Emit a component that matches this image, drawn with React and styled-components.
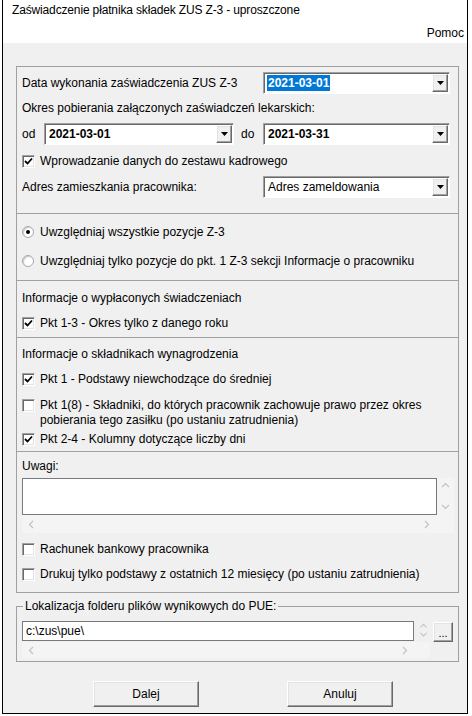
import React from 'react'
import styled, { createGlobalStyle } from 'styled-components'

const Global = createGlobalStyle`
	body {
		margin: 0;
		background: #fff;
		font-family: "Liberation Sans", Arial, sans-serif;
		font-size: 12px;
		color: #000;
	}
	* { box-sizing: border-box; }
`

const Window = styled.div`
	width: 466px;
	height: 714px;
	margin-left: 2px;
	border: 1px solid #000;
	border-top: none;
	display: flex;
	flex-direction: column;
	background: #f0f0f0;
`

const TitleBar = styled.div`
	background: #fff;
	height: 43px;
	flex-shrink: 0;
	padding: 3px 3px 0 9px;
	display: flex;
	flex-direction: column;
	line-height: 15px;
`

const Title = styled.div`
	letter-spacing: -0.15px;
`

const Menu = styled.div`
	margin-top: 8px;
	text-align: right;
`

const Content = styled.div`
	flex: 1;
	padding: 23px 0 0 13px;
	display: flex;
	flex-direction: column;
`

const Panel = styled.div`
	width: 443px;
	border: 1px solid #a0a0a0;
`

const Section = styled.div`
	padding: 0 8px ${({ $pb }) => $pb}px 5px;
	& + & {
		border-top: 1px solid #a0a0a0;
	}
`

const Row = styled.div`
	display: flex;
	align-items: ${({ $top }) => ($top ? 'flex-start' : 'center')};
	height: ${({ $h }) => $h || 20}px;
	margin-top: ${({ $mt }) => $mt || 0}px;
	gap: 5px;
	line-height: 15px;
`

const FieldRow = styled.div`
	display: grid;
	grid-template-columns: ${({ $cols }) => $cols};
	align-items: center;
	height: 22px;
	margin-top: ${({ $mt }) => $mt || 0}px;
`

const Combo = styled.div`
	height: 22px;
	display: flex;
	align-items: center;
	background: #fff;
	border: 1px solid;
	border-color: #a0a0a0 #fff #fff #a0a0a0;
	box-shadow: inset 1px 1px 0 #696969;
	padding: 1px 1px 1px 3px;
`

const ComboValue = styled.div`
	flex: 1;
	font-weight: ${({ $bold }) => ($bold ? 700 : 400)};
	span {
		display: inline-block;
		line-height: 16px;
		padding: 0 1px;
		background: ${({ $selected }) => ($selected ? '#0078d7' : 'transparent')};
		color: ${({ $selected }) => ($selected ? '#fff' : '#000')};
	}
`

const RaisedButton = styled.div`
	display: flex;
	align-items: center;
	justify-content: center;
	background: #f0f0f0;
	border: 1px solid;
	border-color: #fff #696969 #696969 #fff;
	box-shadow: inset -1px -1px 0 #a0a0a0, inset 1px 1px 0 #e3e3e3;
`

const DropButton = styled(RaisedButton)`
	width: 16px;
	height: 18px;
	align-self: flex-end;
`

const Box = styled.div`
	width: 13px;
	height: 13px;
	flex-shrink: 0;
	display: flex;
	align-items: center;
	justify-content: center;
	background: #fff;
	border: 1px solid;
	border-color: #a0a0a0 #fff #fff #a0a0a0;
	box-shadow: inset 1px 1px 0 #696969, inset -1px -1px 0 #e3e3e3;
	margin-top: ${({ $mt }) => $mt || 0}px;
`

const RadioDot = styled.div`
	width: 12px;
	height: 12px;
	flex-shrink: 0;
	border-radius: 50%;
	background: #fff;
	border: 1px solid #a9a9a9;
	box-shadow: inset 1px 1px 1px #c8c8c8;
	display: flex;
	align-items: center;
	justify-content: center;
	margin-right: 1px;

	&::after {
		content: '';
		width: 4px;
		height: 4px;
		border-radius: 50%;
		background: ${({ $on }) => ($on ? '#000' : 'transparent')};
	}
`

const Memo = styled.div`
	display: grid;
	grid-template-columns: 415px 17px;
	grid-template-rows: 37px 18px;
	margin-top: 2px;
	background: #f4f4f4;
	width: 432px;
`

const MemoArea = styled.div`
	background: #fff;
	border: 1px solid #7a7a7a;
`

const VScroll = styled.div`
	display: flex;
	flex-direction: column;
	align-items: center;
	justify-content: space-between;
	padding: ${({ $pad }) => $pad};
`

const HScroll = styled.div`
	grid-column: 1 / span 2;
	display: flex;
	align-items: center;
	justify-content: space-between;
	padding: 0 ${({ $pr }) => $pr}px 0 6px;
`

const Group = styled.fieldset`
	width: 443px;
	margin: 6px 0 0;
	padding: 7px 5px 3px;
	border: 1px solid #a0a0a0;
`

const Legend = styled.legend`
	padding: 0 2px;
	margin-left: 1px;
	line-height: 15px;
`

const PathRow = styled.div`
	display: grid;
	grid-template-columns: 392px 18px 21px;
	align-items: start;
`

const PathInput = styled.div`
	height: 20px;
	background: #fff;
	border: 1px solid #7a7a7a;
	padding-left: 3px;
	line-height: 18px;
`

const Spinner = styled.div`
	height: 20px;
	display: flex;
	flex-direction: column;
	align-items: center;
	justify-content: space-around;
	padding: 2px 0;
`

const BrowseButton = styled(RaisedButton)`
	height: 20px;
	margin-top: 1px;
	margin-left: 1px;
	font-size: 11px;
	line-height: 8px;
	align-items: flex-end;
	padding-bottom: 4px;
`

const PathScroll = styled.div`
	width: 408px;
	height: 16px;
	background: #f4f4f4;
	display: flex;
	align-items: center;
	justify-content: space-between;
	padding: 0 20px 0 6px;
`

const Buttons = styled.div`
	display: flex;
	gap: 88px;
	margin-top: 19px;
	padding-left: 77px;
`

const DialogButton = styled(RaisedButton)`
	width: 106px;
	height: 26px;
`

const Check = () => (
	<svg width="9" height="9" viewBox="0 0 9 9">
		<path d="M1 4 L3.5 6.5 L8 1.5" stroke="#000" strokeWidth="1.8" fill="none" />
	</svg>
)

const Chevron = ({ dir }) => {
	const d = {
		up: 'M1 5 L4.5 1.5 L8 5',
		down: 'M1 2 L4.5 5.5 L8 2',
		left: 'M5 1 L1.5 4.5 L5 8',
		right: 'M2 1 L5.5 4.5 L2 8',
	}[dir]
	return (
		<svg width="9" height="9" viewBox="0 0 9 9">
			<path d={d} stroke="#c2c2c2" strokeWidth="1.2" fill="none" />
		</svg>
	)
}

const Arrow = () => (
	<svg width="7" height="4" viewBox="0 0 7 4">
		<path d="M0 0 H7 L3.5 4 Z" fill="#000" />
	</svg>
)

const ComboBox = ({ value, bold, selected }) => (
	<Combo>
		<ComboValue $bold={bold} $selected={selected}>
			<span>{value}</span>
		</ComboValue>
		<DropButton>
			<Arrow />
		</DropButton>
	</Combo>
)

const CheckRow = ({ checked, children, mt, h, top }) => (
	<Row $mt={mt} $h={h} $top={top}>
		<Box $mt={top ? 1 : 0}>{checked && <Check />}</Box>
		<div>{children}</div>
	</Row>
)

const RadioRow = ({ on, children, mt }) => (
	<Row $mt={mt}>
		<RadioDot $on={on} />
		<div>{children}</div>
	</Row>
)

export default function App() {
	return (
		<>
			<Global />
			<Window>
				<TitleBar>
					<Title>Zaświadczenie płatnika składek ZUS Z-3 - uproszczone</Title>
					<Menu>Pomoc</Menu>
				</TitleBar>
				<Content>
					<Panel>
						<Section $pb={15}>
							<FieldRow $mt={5} $cols="241px 187px">
								<div>Data wykonania zaświadczenia ZUS Z-3</div>
								<ComboBox value="2021-03-01" bold selected />
							</FieldRow>
							<Row $mt={4}>Okres pobierania załączonych zaświadczeń lekarskich:</Row>
							<FieldRow $mt={5} $cols="22px 190px 29px 187px">
								<div>od</div>
								<ComboBox value="2021-03-01" bold />
								<div style={{ paddingLeft: 7 }}>do</div>
								<ComboBox value="2021-03-31" bold />
							</FieldRow>
							<CheckRow mt={6} checked>
								Wprowadzanie danych do zestawu kadrowego
							</CheckRow>
							<FieldRow $mt={5} $cols="241px 187px">
								<div>Adres zamieszkania pracownika:</div>
								<ComboBox value="Adres zameldowania" />
							</FieldRow>
						</Section>
						<Section $pb={9}>
							<RadioRow mt={8} on>
								Uwzględniaj wszystkie pozycje Z-3
							</RadioRow>
							<RadioRow mt={9}>
								Uwzględniaj tylko pozycje do pkt. 1 Z-3 sekcji Informacje o pracowniku
							</RadioRow>
						</Section>
						<Section $pb={4}>
							<Row $mt={7}>Informacje o wypłaconych świadczeniach</Row>
							<CheckRow mt={5} checked>
								Pkt 1-3 - Okres tylko z danego roku
							</CheckRow>
						</Section>
						<Section $pb={2}>
							<Row $mt={6}>Informacje o składnikach wynagrodzenia</Row>
							<CheckRow mt={5} checked>
								Pkt 1 - Podstawy niewchodzące do średniej
							</CheckRow>
							<CheckRow mt={9} h={30} top>
								Pkt 1(8) - Składniki, do których pracownik zachowuje prawo przez okres
								<br />
								pobierania tego zasiłku (po ustaniu zatrudnienia)
							</CheckRow>
							<CheckRow mt={1} checked>
								Pkt 2-4 - Kolumny dotyczące liczby dni
							</CheckRow>
						</Section>
						<Section $pb={8}>
							<Row $mt={4}>Uwagi:</Row>
							<Memo>
								<MemoArea />
								<VScroll $pad="4px 0 3px">
									<Chevron dir="up" />
									<Chevron dir="down" />
								</VScroll>
								<HScroll $pr={22}>
									<Chevron dir="left" />
									<Chevron dir="right" />
								</HScroll>
							</Memo>
							<CheckRow mt={6}>Rachunek bankowy pracownika</CheckRow>
							<CheckRow mt={5}>
								Drukuj tylko podstawy z ostatnich 12 miesięcy (po ustaniu zatrudnienia)
							</CheckRow>
						</Section>
					</Panel>
					<Group>
						<Legend>Lokalizacja folderu plików wynikowych do PUE:</Legend>
						<PathRow>
							<PathInput>c:\zus\pue\</PathInput>
							<Spinner>
								<Chevron dir="up" />
								<Chevron dir="down" />
							</Spinner>
							<BrowseButton>...</BrowseButton>
						</PathRow>
						<PathScroll>
							<Chevron dir="left" />
							<Chevron dir="right" />
						</PathScroll>
					</Group>
					<Buttons>
						<DialogButton>Dalej</DialogButton>
						<DialogButton>Anuluj</DialogButton>
					</Buttons>
				</Content>
			</Window>
		</>
	)
}
